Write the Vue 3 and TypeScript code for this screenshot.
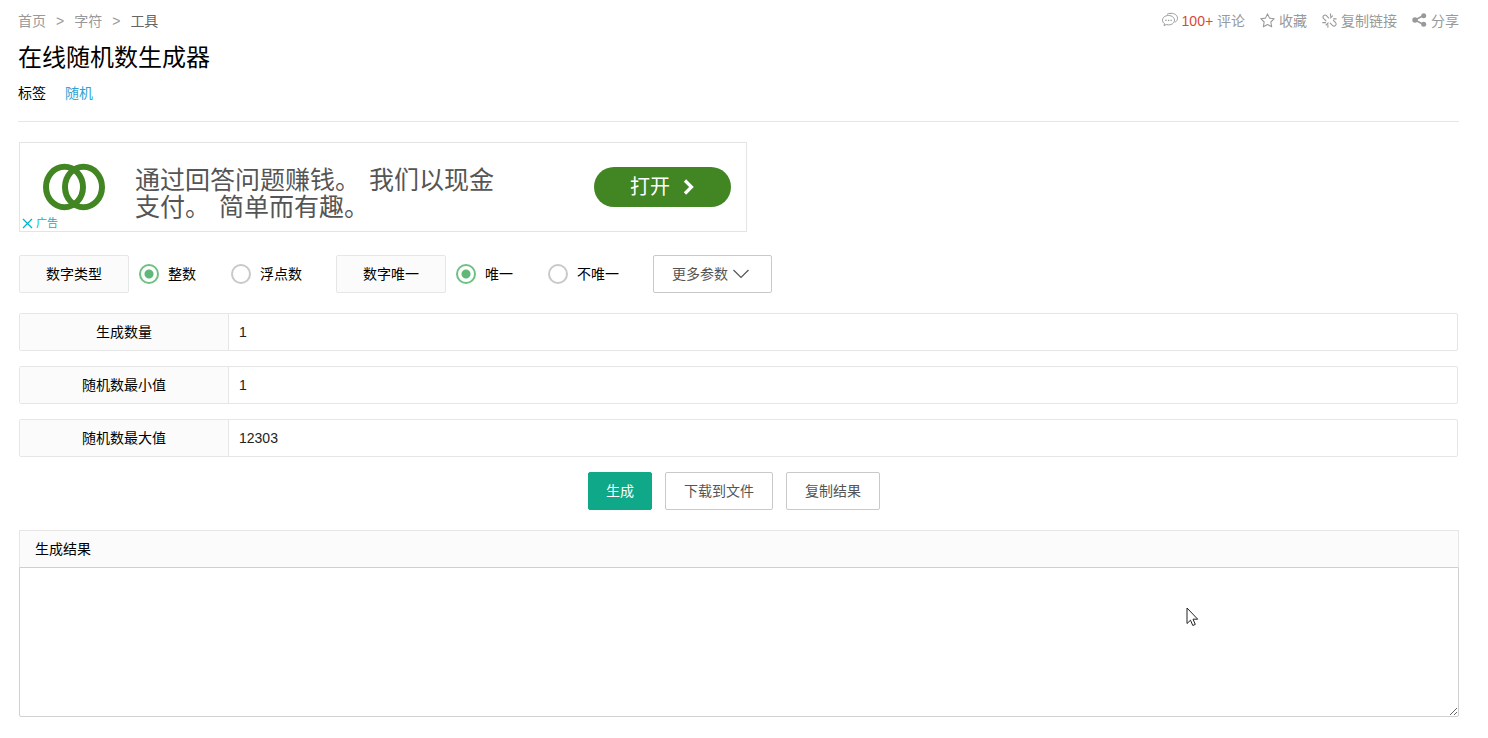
<script setup lang="ts">
import { ref } from 'vue'

interface Field {
  id: string
  label: string
  value: string
}

const numberType = ref('int')
const unique = ref('yes')
const result = ref('')
const fields = ref<Field[]>([
  { id: 'count', label: '生成数量', value: '1' },
  { id: 'min', label: '随机数最小值', value: '1' },
  { id: 'max', label: '随机数最大值', value: '12303' },
])

function generate() {
  const [count, min, max] = fields.value.map((f) => Number(f.value))
  const values: number[] = []
  const isInt = numberType.value === 'int'
  const limit = isInt && unique.value === 'yes' ? Math.min(count, max - min + 1) : count
  while (values.length < limit) {
    const raw = min + Math.random() * (max - min + (isInt ? 1 : 0))
    const next = isInt ? Math.floor(raw) : raw
    if (unique.value === 'no' || !values.includes(next)) values.push(next)
  }
  result.value = values.join('\n')
}
</script>

<template>
  <main class="page">
    <header class="top">
      <nav class="crumbs">
        <a href="#">首页</a>
        <span class="sep">&gt;</span>
        <a href="#">字符</a>
        <span class="sep">&gt;</span>
        <a href="#" class="current">工具</a>
      </nav>
      <div class="tools">
        <a href="#" class="tool">
          <svg width="16" height="16" viewBox="0 0 16 16" fill="none" stroke="currentColor">
            <path d="M6.500 3.500c3.400 0 6 2 6 4.700s-2.600 4.700-6 4.700c-.8 0-1.500-.1-2.200-.3L2 13.500l.5-1.900C1.200 10.800.5 9.600.5 8.200c0-2.700 2.600-4.700 6-4.700z" />
            <path d="M5 2.300C6 1.700 7.400 1.300 9 1.300c3.700 0 6.500 2.100 6.500 4.900 0 1.700-.9 3.100-2.300 4" />
            <path d="M3.300 8.300h1.300M5.900 8.300h1.300M8.500 8.300h1.300" stroke-width="1.300" />
          </svg>
          <span><span class="hot">100+</span> 评论</span>
        </a>
        <a href="#" class="tool">
          <svg width="15" height="15" viewBox="0 0 14 14" fill="none" stroke="currentColor" stroke-linejoin="round">
            <path d="M7 .8l1.900 4 4.400.5-3.200 3.100.8 4.500L7 10.700l-3.900 2.200.8-4.500L.7 5.300l4.400-.5z" />
          </svg>
          <span>收藏</span>
        </a>
        <a href="#" class="tool">
          <svg width="15" height="15" viewBox="0 0 14 14" fill="none" stroke="currentColor" stroke-linecap="round">
            <path d="M6.300 4.700L4.400 2.600C3.500 1.700 2.200 1.700 1.500 2.500s-.7 2 .1 2.800L3.700 7.300M7.700 9.500l2 2c.9.9 2.100.9 2.900.1s.8-2-.1-2.900l-1.800-1.700M8 4.600l1.800-1.900M5.800 9.200l-2 2M8 3V.7M10.700 5.500h2.500M5.500 11v2.300M.7 9h2.600" />
          </svg>
          <span>复制链接</span>
        </a>
        <a href="#" class="tool">
          <svg width="15" height="14" viewBox="0 0 15 14" fill="currentColor">
            <path d="M11.500 2.500L3 7l8.500 4.500" fill="none" stroke="currentColor" stroke-width="1.500" />
            <circle cx="11.700" cy="2.700" r="2.500" />
            <circle cx="3" cy="7" r="2.700" />
            <circle cx="11.700" cy="11.300" r="2.500" />
          </svg>
          <span>分享</span>
        </a>
      </div>
    </header>

    <h1 class="title">在线随机数生成器</h1>
    <div class="tags">
      <span>标签</span>
      <a href="#">随机</a>
    </div>

    <div class="content">
      <aside class="ad">
        <svg class="ad-logo" width="62" height="48" viewBox="0 0 62 48" fill="none" stroke="#418622" stroke-width="6">
          <ellipse cx="21.500" cy="24" rx="18.500" ry="20.200" />
          <ellipse cx="40.500" cy="24" rx="18.500" ry="20.200" />
        </svg>
        <p class="ad-text">
          通过回答问题赚钱。 <span>我们以现金</span><br />支付。 <span>简单而有趣。</span>
        </p>
        <a href="#" class="ad-open">
          <span>打开</span>
          <svg width="12" height="16" viewBox="0 0 12 16" fill="none" stroke="#fff" stroke-width="3.200">
            <path d="M2 1.500L8.500 8 2 14.500" />
          </svg>
        </a>
        <a href="#" class="ad-mark">
          <svg width="11" height="11" viewBox="0 0 11 11" fill="none" stroke="currentColor" stroke-width="1.300">
            <path d="M1 1l9 9M10 1l-9 9" />
          </svg>
          <span>广告</span>
        </a>
      </aside>

      <form @submit.prevent="generate">
        <div class="options">
          <div class="group" role="radiogroup" aria-labelledby="type-label">
            <span id="type-label" class="caption">数字类型</span>
            <label class="radio"><input v-model="numberType" type="radio" name="type" value="int" />整数</label>
            <label class="radio"><input v-model="numberType" type="radio" name="type" value="float" />浮点数</label>
          </div>
          <div class="group" role="radiogroup" aria-labelledby="unique-label">
            <span id="unique-label" class="caption">数字唯一</span>
            <label class="radio"><input v-model="unique" type="radio" name="unique" value="yes" />唯一</label>
            <label class="radio"><input v-model="unique" type="radio" name="unique" value="no" />不唯一</label>
          </div>
          <button type="button" class="btn more">
            更多参数
            <svg width="16" height="10" viewBox="0 0 16 10" fill="none" stroke="currentColor" stroke-width="1.200">
              <path d="M.5 1L8 8.500 15.500 1" />
            </svg>
          </button>
        </div>

        <div v-for="field in fields" :key="field.id" class="field">
          <label :for="field.id">{{ field.label }}</label>
          <input :id="field.id" v-model="field.value" type="text" />
        </div>

        <div class="actions">
          <button type="submit" class="btn primary">生成</button>
          <button type="button" class="btn">下载到文件</button>
          <button type="button" class="btn">复制结果</button>
        </div>

        <div class="result">
          <label for="result">生成结果</label>
          <textarea id="result" v-model="result"></textarea>
        </div>
      </form>
    </div>

    <svg class="cursor" width="13" height="20" viewBox="0 0 13 20" fill="#fff" stroke="#222" aria-hidden="true">
      <path d="M1 1v15.500l3.500-3.300 2.300 5.300 2.500-1.100L7 12.200h4.700z" />
    </svg>
  </main>
</template>

<style>
body {
  margin: 0;
  background: #fff;
}
</style>

<style scoped>
.page {
  position: relative;
  padding: 11px 29px 21px 18px;
  font: 14px/20px "Liberation Sans", "Noto Sans CJK SC", sans-serif;
  color: #000;
}
.page * {
  box-sizing: border-box;
}
a {
  color: inherit;
  text-decoration: none;
}
button,
input,
textarea {
  font: inherit;
  margin: 0;
}
.top {
  display: flex;
  justify-content: space-between;
  color: #999;
}
.crumbs {
  display: flex;
  gap: 10px;
}
.sep {
  font-size: 14px;
}
.current {
  color: #666;
}
.tools {
  display: flex;
  gap: 15px;
}
.tool {
  display: flex;
  align-items: center;
  gap: 4px;
}
.tool svg {
  margin-bottom: 2px;
}
.hot {
  color: #d9463d;
}
.title {
  margin: 9px 0 0;
  font-size: 24px;
  line-height: 36px;
  font-weight: 400;
}
.tags {
  display: flex;
  gap: 19px;
  padding: 7px 0 18px;
  border-bottom: 1px solid #e6e6e6;
}
.tags a {
  color: #2ba5d5;
}
.content {
  padding-left: 1px;
}
.ad {
  position: relative;
  display: flex;
  align-items: center;
  max-width: 728px;
  height: 90px;
  margin-top: 20px;
  padding: 0 15px 0 23px;
  border: 1px solid #e4e4e4;
}
.ad-text {
  flex: 1;
  margin: 13px 0 0 30px;
  font-size: 25px;
  line-height: 27px;
  color: #555;
  white-space: nowrap;
}
.ad-text span {
  margin-left: 2px;
}
.ad-open {
  display: flex;
  align-items: center;
  justify-content: center;
  gap: 13px;
  width: 137px;
  height: 40px;
  border-radius: 20px;
  background: #418622;
  color: #fff;
  font-size: 20px;
}
.ad-mark {
  position: absolute;
  left: 2px;
  bottom: 0;
  display: flex;
  align-items: center;
  gap: 3px;
  font-size: 11px;
  line-height: 16px;
  color: #00b5cc;
}
.options {
  display: flex;
  align-items: center;
  gap: 34px;
  margin: 23px 0 20px;
}
.group {
  display: flex;
  align-items: center;
}
.caption {
  width: 110px;
  margin-right: 10px;
  line-height: 36px;
  text-align: center;
  border: 1px solid #e6e6e6;
  border-radius: 2px;
  background: #fbfbfb;
}
.radio {
  display: flex;
  align-items: center;
  gap: 9px;
}
.radio + .radio {
  margin-left: 35px;
}
.radio input {
  appearance: none;
  width: 20px;
  height: 20px;
  border: 2px solid #c9c9c9;
  border-radius: 50%;
  background: #fff;
}
.radio input:checked {
  border-color: #6fc083;
  background: radial-gradient(circle, #5fb878 4px, #fff 5px);
}
.btn {
  height: 38px;
  padding: 0 18px;
  border: 1px solid #c9c9c9;
  border-radius: 2px;
  background: #fff;
  color: #555;
  line-height: 36px;
  white-space: nowrap;
}
.primary {
  padding: 0 17px;
  border-color: #0fa888;
  background: #0fa888;
  color: #fff;
}
.more {
  display: flex;
  align-items: center;
  gap: 5px;
  width: 119px;
}
.more svg {
  flex: none;
}
.field {
  display: flex;
  height: 38px;
  margin: 0 1px 15px 0;
  border: 1px solid #e6e6e6;
  border-radius: 2px;
}
.field label {
  width: 209px;
  line-height: 36px;
  text-align: center;
  border-right: 1px solid #e6e6e6;
  background: #fbfbfb;
}
.field input {
  flex: 1;
  min-width: 0;
  padding: 0 10px;
  border: 0;
  background: transparent;
  color: #222;
}
.actions {
  display: flex;
  justify-content: center;
  gap: 13px;
  padding-right: 10px;
}
.result {
  margin-top: 20px;
}
.result label {
  display: block;
  padding: 0 15px;
  line-height: 36px;
  border: 1px solid #e6e6e6;
  border-bottom: 0;
  background: #fbfbfb;
}
.result textarea {
  display: block;
  width: 100%;
  height: 150px;
  padding: 10px;
  border: 1px solid #d0d0d0;
  border-radius: 0 0 2px 2px;
  resize: vertical;
}
.cursor {
  position: absolute;
  left: 1186px;
  top: 607px;
  pointer-events: none;
}
</style>
